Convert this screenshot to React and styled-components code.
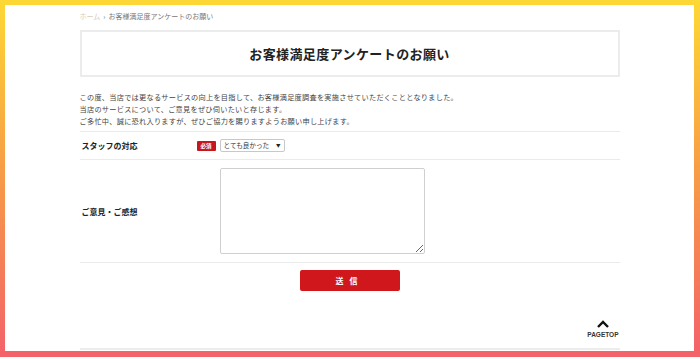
import React from 'react';
import styled, { createGlobalStyle } from 'styled-components';

const GlobalStyle = createGlobalStyle`
  html, body {
    margin: 0;
    padding: 0;
  }
  body {
    font-family: "Noto Sans CJK JP", "Noto Sans", sans-serif;
    color: #333;
  }
  * {
    box-sizing: border-box;
  }
`;

const Frame = styled.div`
  height: 357px;
  padding: 5px 6px 6px 5px;
  background: linear-gradient(to bottom, #fdd835 0%, #f7a044 45%, #f3616a 100%);
  overflow: hidden;
`;

const Panel = styled.div`
  height: 100%;
  background: #fff;
  overflow: hidden;
`;

const Column = styled.div`
  width: 540px;
  margin: 0 auto;
  display: flex;
  flex-direction: column;
`;

const Breadcrumb = styled.div`
  display: flex;
  align-items: center;
  gap: 3px;
  height: 25px;
  padding-bottom: 3px;
  font-size: 7px;
  color: #777;
`;

const Crumb = styled.span`
  color: ${(props) => (props.home ? '#d8ccb9' : '#777')};
`;

const TitleBox = styled.div`
  height: 47px;
  border: 2px solid #ececec;
  display: flex;
  align-items: center;
  justify-content: center;
`;

const Title = styled.h1`
  margin: 0;
  font-size: 13px;
  font-weight: bold;
  color: #222;
  letter-spacing: 0.4px;
`;

const Intro = styled.div`
  padding: 14px 0 4px;
  font-size: 7.2px;
  letter-spacing: 0.25px;
  line-height: 12px;
  color: #444;
`;

const Row = styled.div`
  display: grid;
  grid-template-columns: 117px 23px 1fr;
  align-items: center;
  border-top: 1px solid #eaeaea;
  min-height: ${(props) => props.height}px;
  padding: ${(props) => (props.tall ? '8px 0' : '0')};
`;

const Label = styled.div`
  padding-left: 2px;
  font-size: 8px;
  font-weight: bold;
  color: #222;
`;

const Badge = styled.span`
  justify-self: start;
  width: 19px;
  height: 10px;
  background: #c8161d;
  color: #fff;
  font-size: 5.5px;
  font-weight: bold;
  border-radius: 1px;
  display: flex;
  align-items: center;
  justify-content: center;
`;

const SelectWrap = styled.div`
  position: relative;
  width: 65px;
  height: 13px;
`;

const Select = styled.select`
  appearance: none;
  display: block;
  width: 100%;
  height: 13px;
  line-height: 11px;
  border: 1px solid #c8c8c8;
  border-radius: 2px;
  background: #fff;
  font-family: inherit;
  font-size: 6.6px;
  color: #333;
  padding: 0 0 0 3px;
  margin: 0;
  outline: none;
`;

const Arrow = styled.span`
  position: absolute;
  right: 4px;
  top: 4px;
  font-size: 4.5px;
  line-height: 5px;
  color: #222;
  pointer-events: none;
`;

const TextArea = styled.textarea`
  grid-column: 2 / span 2;
  margin-left: 23px;
  width: 205px;
  height: 86px;
  border: 1px solid #cfcfcf;
  border-radius: 2px;
  resize: both;
  display: block;
`;

const Actions = styled.div`
  border-top: 1px solid #eaeaea;
  display: flex;
  justify-content: center;
  padding-top: 7px;
`;

const Submit = styled.button`
  width: 100px;
  height: 21px;
  border: none;
  border-radius: 2px;
  background: #d0181c;
  color: #fff;
  font-family: inherit;
  font-size: 8px;
  font-weight: bold;
  letter-spacing: 6px;
  padding-left: 6px;
  cursor: pointer;
`;

const PageTop = styled.div`
  align-self: flex-end;
  margin-top: 29px;
  margin-right: 1px;
  display: flex;
  flex-direction: column;
  align-items: center;
  gap: 3px;
  font-family: "Liberation Sans", Arial, sans-serif;
  font-size: 6.5px;
  font-weight: bold;
  color: #333;
`;

const Footer = styled.div`
  margin-top: 10px;
  border-top: 2px solid #ececec;
`;

const App = () => {
  return (
    <Frame>
      <GlobalStyle />
      <Panel>
        <Column>
          <Breadcrumb>
            <Crumb home>ホーム</Crumb>
            <Crumb>›</Crumb>
            <Crumb>お客様満足度アンケートのお願い</Crumb>
          </Breadcrumb>
          <TitleBox>
            <Title>お客様満足度アンケートのお願い</Title>
          </TitleBox>
          <Intro>
            この度、当店では更なるサービスの向上を目指して、お客様満足度調査を実施させていただくこととなりました。
            <br />
            当店のサービスについて、ご意見をぜひ伺いたいと存じます。
            <br />
            ご多忙中、誠に恐れ入りますが、ぜひご協力を賜りますようお願い申し上げます。
          </Intro>
          <Row height={28}>
            <Label>スタッフの対応</Label>
            <Badge>必須</Badge>
            <SelectWrap>
              <Select defaultValue="good">
                <option value="good">とても良かった</option>
                <option value="ok">良かった</option>
                <option value="normal">普通</option>
                <option value="bad">悪かった</option>
              </Select>
              <Arrow>▼</Arrow>
            </SelectWrap>
          </Row>
          <Row height={102} tall>
            <Label>ご意見・ご感想</Label>
            <TextArea />
          </Row>
          <Actions>
            <Submit>送信</Submit>
          </Actions>
          <PageTop>
            <svg width="12" height="8" viewBox="0 0 12 8">
              <path d="M1 7 L6 2 L11 7" fill="none" stroke="#111" strokeWidth="2.4" />
            </svg>
            PAGETOP
          </PageTop>
          <Footer />
        </Column>
      </Panel>
    </Frame>
  );
};

export default App;
